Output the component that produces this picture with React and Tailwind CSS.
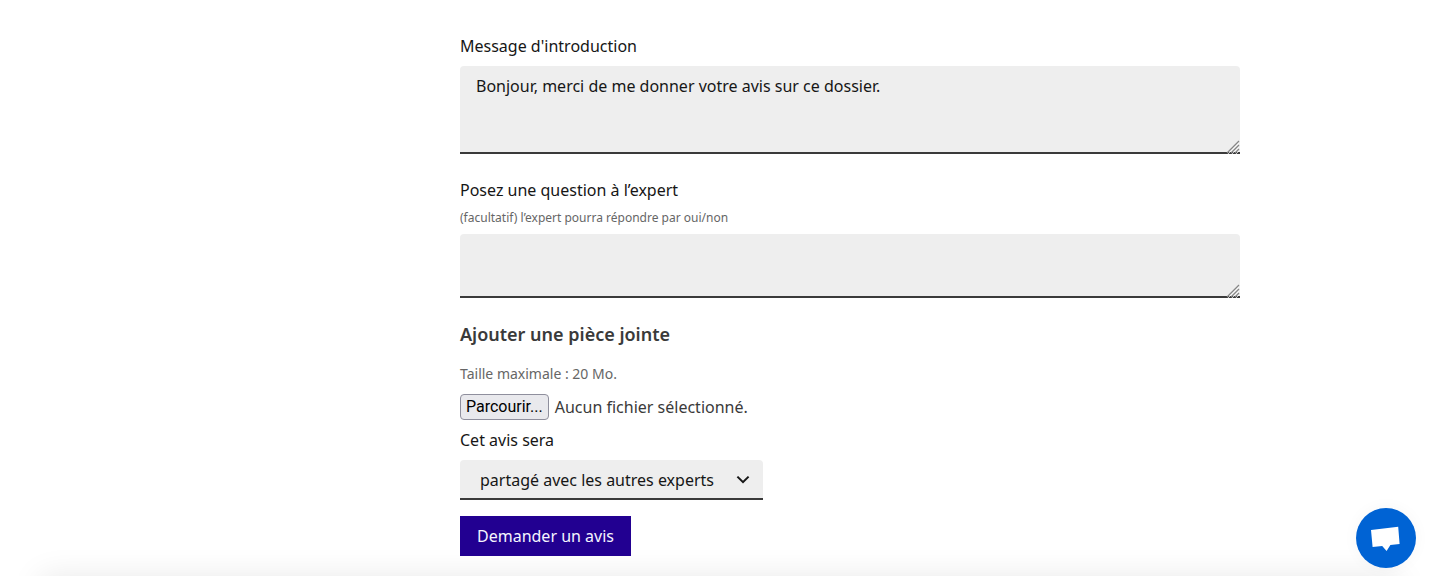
import { useRef, useState } from "react";

function ResizeGrip() {
  return (
    <svg
      className="pointer-events-none absolute right-0 bottom-0 size-3.5"
      viewBox="0 0 14 14"
      fill="none"
      aria-hidden="true"
    >
      <path d="M2 14 13 3M6 14l7-7M10 14l3-3" stroke="#fff" strokeOpacity="0.7" strokeWidth="1" />
      <path d="M1 13 13 1M5 13l8-8M9 13l4-4" stroke="#858585" strokeWidth="1.2" />
    </svg>
  );
}

function TextArea({ id, className, ...props }) {
  return (
    <div className="relative">
      <textarea
        id={id}
        className={`block w-full resize-y rounded-t border-b-2 border-[#3a3a3a] bg-[#eee] px-4 py-2 leading-6 text-[#161616] [&::-webkit-resizer]:appearance-none ${className}`}
        {...props}
      />
      <ResizeGrip />
    </div>
  );
}

function FilePicker() {
  const input = useRef(null);
  const [name, setName] = useState("");
  return (
    <div className="mt-2 flex items-center gap-1.5">
      <input
        ref={input}
        id="piece-jointe"
        type="file"
        tabIndex={-1}
        className="sr-only"
        onChange={(e) => setName(e.target.files[0]?.name ?? "")}
      />
      <button
        type="button"
        onClick={() => input.current.click()}
        className="h-[26px] rounded border border-[#8f8f9d] bg-[#e9e9ed] px-[5px] font-['Roboto','Liberation_Sans',sans-serif] leading-6 text-black"
      >
        Parcourir...
      </button>
      <span>{name || "Aucun fichier sélectionné."}</span>
    </div>
  );
}

export default function App() {
  return (
    <div className="relative min-h-screen overflow-hidden bg-white font-['Noto_Sans','Open_Sans',sans-serif] text-base text-[#3a3a3a]">
      <div className="absolute inset-x-10 top-full h-10 shadow-[0_0_32px_rgba(0,0,0,0.09)]" aria-hidden="true" />
      <main className="relative mx-auto max-w-[1041px] pl-[261px]">
        <form className="flex flex-col items-start pt-[34px]" onSubmit={(e) => e.preventDefault()}>
          <div className="w-full">
            <label htmlFor="introduction" className="mb-2 block leading-6 text-[#161616]">
              Message d'introduction
            </label>
            <TextArea
              id="introduction"
              className="h-[88px]"
              defaultValue="Bonjour, merci de me donner votre avis sur ce dossier."
            />
          </div>

          <div className="mt-6 w-full">
            <label htmlFor="question" className="mb-1.5 block leading-6 text-[#161616]">
              Posez une question à l’expert
              <span className="mt-1.5 block text-xs leading-5 text-[#666]">
                (facultatif) l’expert pourra répondre par oui/non
              </span>
            </label>
            <TextArea id="question" className="h-16" />
          </div>

          <label htmlFor="piece-jointe" className="mt-6 text-lg leading-6 font-semibold">
            Ajouter une pièce jointe
          </label>
          <p className="mt-4 text-sm leading-6 text-[#666]">Taille maximale : 20 Mo.</p>
          <FilePicker />

          <label htmlFor="confidentialite" className="mt-2 leading-6 text-[#161616]">
            Cet avis sera
          </label>
          <div className="relative mt-2">
            <select
              id="confidentialite"
              className="h-10 w-[303px] appearance-none rounded-t border-b-2 border-[#3a3a3a] bg-[#eee] pt-0.5 pr-10 pl-5 text-[#161616]"
            >
              <option>partagé avec les autres experts</option>
              <option>confidentiel</option>
            </select>
            <svg
              className="pointer-events-none absolute top-3 right-3 size-4"
              viewBox="0 0 16 16"
              fill="#161616"
              aria-hidden="true"
            >
              <path d="m8 8.8 4.9-4.9 1.4 1.4L8 11.6 1.7 5.3l1.4-1.4L8 8.8Z" />
            </svg>
          </div>

          <button type="submit" className="mt-4 h-10 bg-[#220091] px-[17px] text-[#f5f5fe]">
            Demander un avis
          </button>
        </form>
      </main>

      <button
        type="button"
        aria-label="Ouvrir la messagerie"
        className="fixed right-[23px] bottom-2 size-[60px] rounded-full bg-[#0063d4] shadow-[0_0_16px_rgba(0,0,0,0.04)]"
      >
        <svg className="size-full" viewBox="0 0 60 60" fill="#fff" aria-hidden="true">
          <path d="M15 22 42.2 18.8 43.6 36 34.4 37 30.6 43 26.2 38 16.6 39Z" />
        </svg>
      </button>
    </div>
  );
}
